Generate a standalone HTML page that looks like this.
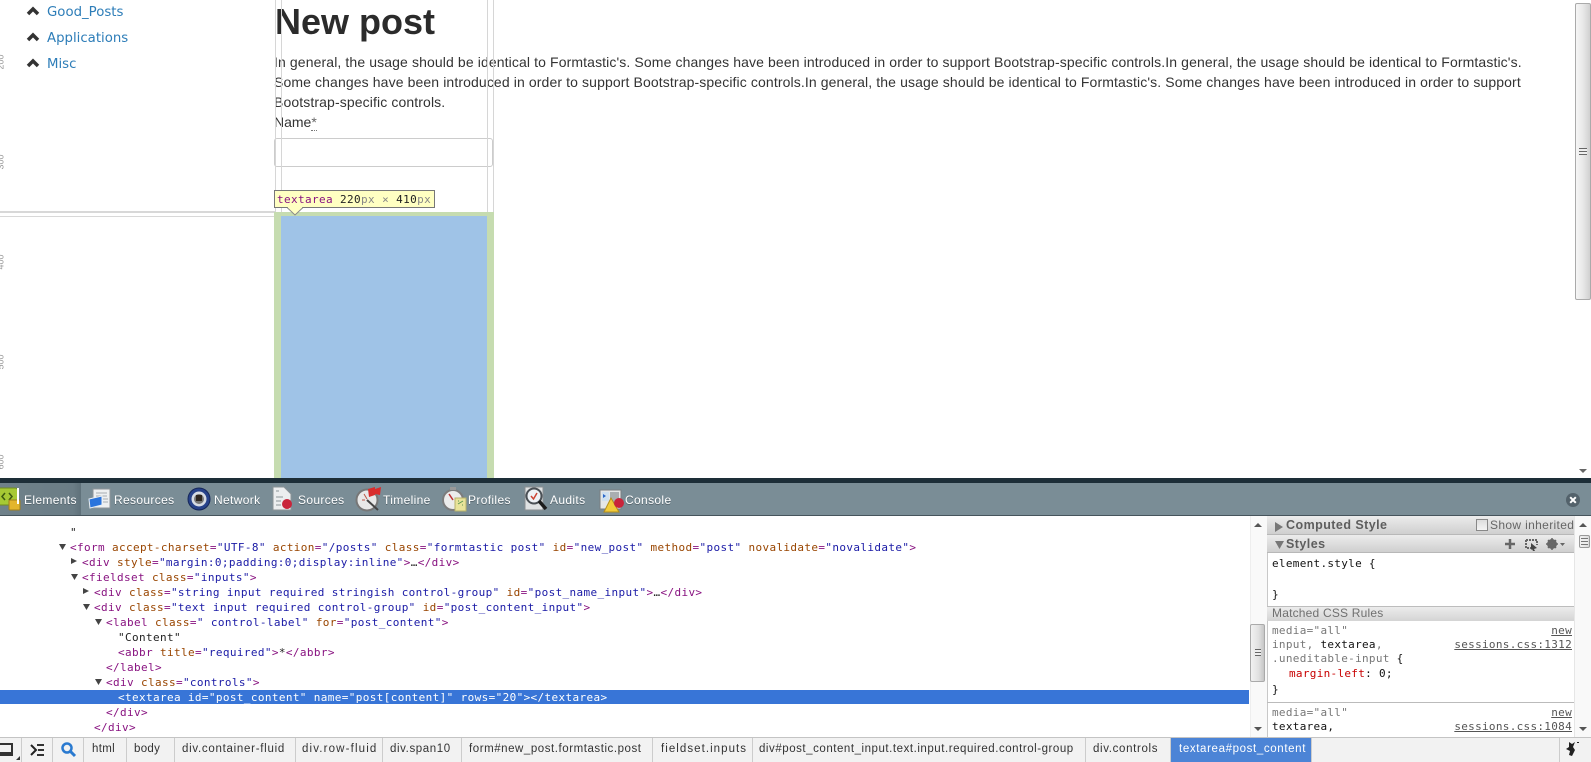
<!DOCTYPE html>
<html><head><meta charset="utf-8"><style>
html,body{margin:0;padding:0;background:#fff}
body{position:relative;width:1591px;height:762px;overflow:hidden;font-family:"Liberation Sans",sans-serif}
.a{position:absolute}
.l{position:absolute;left:47px;font:13.3px/16px "DejaVu Sans",sans-serif;color:#2d7db8;white-space:nowrap}
.r{position:absolute;left:-8px;width:17px;height:8px;font:9px/8px "Liberation Sans",sans-serif;color:#999;transform:rotate(-90deg);text-align:center}
.d{position:absolute;white-space:pre;font:11px/15px "DejaVu Sans Mono",monospace;letter-spacing:.37px;color:#881280;height:15px}
.d i{font-style:normal;color:#994500}.d b{font-weight:normal;color:#1a1aa6}.d u{text-decoration:none;color:#222}
.t{position:absolute;top:492px;font:12px/16px "Liberation Sans",sans-serif;color:#fff;letter-spacing:.35px;white-space:nowrap;text-shadow:0 1px 0 #56656d}
.c{position:absolute;top:741px;font:11.5px/16px "Liberation Sans",sans-serif;color:#333;white-space:nowrap;letter-spacing:.3px}
.s{position:absolute;top:738px;width:1px;height:24px;background:#ccc}
.h{position:absolute;left:1267px;width:307px;background:linear-gradient(#ececec,#cfcfcf);border-bottom:1px solid #b8b8b8;box-sizing:border-box}
.m{position:absolute;white-space:pre;font:11px/15px "DejaVu Sans Mono",monospace;letter-spacing:.3px;color:#111}
.g{color:#777}
.n{position:absolute;right:19px;white-space:pre;font:11px/15px "DejaVu Sans Mono",monospace;letter-spacing:.3px;color:#555;text-decoration:underline}
</style></head><body>

<!-- sidebar -->
<svg class="a" style="left:26px;top:0" width="14" height="70" fill="none" stroke="#333" stroke-width="3.500"><path d="M2 14 7 9 12 14M2 40 7 35 12 40M2 66 7 61 12 66"/></svg>
<div class="l" style="top:5px">Good_Posts</div>
<div class="l" style="top:31px">Applications</div>
<div class="l" style="top:57px">Misc</div>
<div class="r" style="top:58px">200</div>
<div class="r" style="top:158px">300</div>
<div class="r" style="top:258px">400</div>
<div class="r" style="top:358px">500</div>
<div class="r" style="top:458px">600</div>

<!-- page content -->
<div class="a" style="left:275px;top:0;font:bold 36px/44px 'Liberation Sans',sans-serif;color:#2b2b2b">New post</div>
<div class="a" style="left:274px;top:52px;width:1290px;white-space:nowrap;font:14px/20px 'Liberation Sans',sans-serif;letter-spacing:.115px;color:#333">In general, the usage should be identical to Formtastic's. Some changes have been introduced in order to support Bootstrap-specific controls.In general, the usage should be identical to Formtastic's.<br>Some changes have been introduced in order to support Bootstrap-specific controls.In general, the usage should be identical to Formtastic's. Some changes have been introduced in order to support<br>Bootstrap-specific controls.<br><span style="letter-spacing:0">Name<span style="border-bottom:1px dotted #777;color:#666">*</span></span></div>
<div class="a" style="left:274px;top:138px;width:219px;height:29px;box-sizing:border-box;border:1px solid #ccc;border-radius:3px"></div>

<!-- guides -->
<div class="a" style="left:275px;top:0;width:1px;height:212px;background:#d6d6d6"></div>
<div class="a" style="left:281px;top:0;width:1px;height:212px;background:#d6d6d6"></div>
<div class="a" style="left:487px;top:0;width:1px;height:212px;background:#d6d6d6"></div>
<div class="a" style="left:493px;top:0;width:1px;height:212px;background:#d6d6d6"></div>
<div class="a" style="left:0;top:211px;width:275px;height:2px;background:#d8d8d8"></div>
<div class="a" style="left:0;top:216px;width:275px;height:1px;background:#d8d8d8"></div>

<!-- highlight -->
<div class="a" style="left:274px;top:212px;width:220px;height:268px;background:#c6dcb0"></div>
<div class="a" style="left:281px;top:216px;width:206px;height:264px;background:#9fc3e7"></div>

<!-- tooltip -->
<div class="a" style="left:274px;top:190px;width:161px;height:18px;box-sizing:border-box;background:#ffffc2;border:1px solid #777;font:11px/17px 'DejaVu Sans Mono',monospace;letter-spacing:.38px;color:#222;padding-left:2px;white-space:pre"><span style="color:#881280">textarea</span> 220<span style="color:#888">px</span> <span style="color:#888">×</span> 410<span style="color:#888">px</span></div>
<svg class="a" style="left:287px;top:207px" width="18" height="9"><path d="M0 0.500 8 8 16 0.500" fill="#ffffc2" stroke="#888"/><path d="M1 0H15V1H1z" fill="#ffffc2"/></svg>

<!-- page scrollbar -->
<div class="a" style="left:1574px;top:0;width:17px;height:478px;background:#fff"></div>
<div class="a" style="left:1575px;top:3px;width:16px;height:297px;box-sizing:border-box;border:1px solid #aaa;border-radius:2px;background:linear-gradient(90deg,#f6f6f6,#e8e8e8 50%,#d0d0d0)"></div>
<div class="a" style="left:1579px;top:148px;width:8px;height:7px;background:repeating-linear-gradient(#666 0 1px,#eee 1px 3px)"></div>
<svg class="a" style="left:1578px;top:468px" width="10" height="6"><path d="M1 1H9L5 5z" fill="#666"/></svg>

<!-- devtools toolbar -->
<div class="a" style="left:0;top:478px;width:1591px;height:5px;background:#1d2e38"></div>
<div class="a" style="left:0;top:483px;width:1591px;height:33px;box-sizing:border-box;background:#7a8d96;border-bottom:1px solid #46545c"></div>
<div class="a" style="left:0;top:483px;width:81px;height:32px;background:linear-gradient(90deg,#6f818a,#6b7d86 90%,#5f717a)"></div>

<!-- toolbar icons -->
<svg class="a" style="left:0;top:487px" width="22" height="24"><rect x="-3" y="1" width="21" height="17" rx="3" fill="#a6c934" stroke="#6f8c20"/><path d="M5 6 2 9.500 5 13M9 6 12 9.500 9 13" fill="none" stroke="#3c5a10" stroke-width="1.500"/><rect x="9" y="13" width="11" height="10" rx="1" fill="#e3b52c" stroke="#a27f1b"/><path d="M18 1V17" stroke="#fff" stroke-width="2"/></svg>
<svg class="a" style="left:88px;top:488px" width="23" height="22"><rect x="5" y="1" width="17" height="19" fill="#eef0f1" stroke="#8d9599"/><path d="M8 5H19M8 8H19M15 11H20M15 14H20" stroke="#a5adb1"/><path d="M1 11 14 8V17L2 20z" fill="#2a74dc" stroke="#e9eef2"/></svg>
<svg class="a" style="left:187px;top:487px" width="24" height="24"><circle cx="12" cy="12" r="11" fill="#27428a" stroke="#17285a"/><circle cx="12" cy="12" r="7.500" fill="#d7dce4"/><circle cx="12" cy="12" r="5" fill="#777"/><rect x="9" y="8" width="6" height="6" fill="#2e2620"/></svg>
<svg class="a" style="left:271px;top:486px" width="24" height="26"><path d="M2 1H13L20 8V24H2z" fill="#eceeef" stroke="#8a9296"/><path d="M5 5H8M5 11H12M5 15H10M5 19H10" stroke="#8d959a"/><circle cx="16" cy="18" r="5" fill="#c9243a"/></svg>
<svg class="a" style="left:355px;top:486px" width="28" height="26"><circle cx="12" cy="14" r="10.500" fill="#e8e8e8" stroke="#777" stroke-width="2"/><path d="M12 14 23 24" stroke="#444" stroke-width="2"/><path d="M9 8 12 13M7 14H10" stroke="#b54"/><path d="M13 3 20 1 20 9 14 11zM20 3 26 1 25 9 20 8z" fill="#d92c2c"/></svg>
<svg class="a" style="left:442px;top:486px" width="26" height="26"><circle cx="11" cy="14" r="10" fill="#ececec" stroke="#7c7c7c" stroke-width="2"/><rect x="8" y="1" width="6" height="3" fill="#999"/><path d="M11 14 7 8" stroke="#b33" stroke-width="1.500"/><rect x="13" y="12" width="11" height="13" fill="#e8e39a" stroke="#b7b26b"/><path d="M16 18 21 15M16 15H17M20 19H21" stroke="#5a9650"/></svg>
<svg class="a" style="left:524px;top:486px" width="24" height="26"><rect x="1" y="1" width="18" height="23" fill="#dfe2e3" stroke="#8a8f92"/><circle cx="10" cy="10" r="7.500" fill="#eef2f6" stroke="#4a5055" stroke-width="2"/><path d="M7 10 9.500 13 13 7" fill="none" stroke="#c43" stroke-width="1.500"/><path d="M15 15 22 23" stroke="#1c1c1c" stroke-width="3.500"/></svg>
<svg class="a" style="left:599px;top:489px" width="26" height="24"><rect x="1" y="1" width="21" height="19" fill="#e4e6e7" stroke="#7a7f82"/><rect x="3" y="3" width="7" height="9" fill="#cfe0f0"/><path d="M4 5 7 7 4 9" fill="#2a66c8"/><rect x="11" y="3" width="9" height="15" fill="#a9aeb1"/><path d="M5 23 12 9 20 23z" fill="#f1cb3a" stroke="#b28e1c"/><circle cx="20" cy="14" r="5" fill="#c9243a"/></svg>

<div class="t" style="left:24px">Elements</div>
<div class="t" style="left:114px">Resources</div>
<div class="t" style="left:214px">Network</div>
<div class="t" style="left:298px">Sources</div>
<div class="t" style="left:383px">Timeline</div>
<div class="t" style="left:468px">Profiles</div>
<div class="t" style="left:550px">Audits</div>
<div class="t" style="left:625px">Console</div>
<svg class="a" style="left:1565px;top:492px" width="16" height="16"><circle cx="8" cy="8" r="7" fill="#53626b"/><path d="M5.200 5.200 10.800 10.800M10.800 5.200 5.200 10.800" stroke="#fff" stroke-width="2"/></svg>

<!-- DOM tree -->
<div class="a" style="left:0;top:690px;width:1249px;height:14px;background:#3875d7"></div>
<svg class="a" style="left:0;top:517px" width="130" height="190" fill="#444"><path d="M59 27H66L62.500 33zM71 41V47L77 44zM71 57H78L74.500 63zM83 71V77L89 74zM83 87H90L86.500 93zM95 102H102L98.500 108zM95 162H102L98.500 168z"/></svg>
<div class="d" style="left:70px;top:525px"><u>"</u></div>
<div class="d" style="left:70px;top:540px">&lt;form <i>accept-charset</i>=<b>"UTF-8"</b> <i>action</i>=<b>"/posts"</b> <i>class</i>=<b>"formtastic post"</b> <i>id</i>=<b>"new_post"</b> <i>method</i>=<b>"post"</b> <i>novalidate</i>=<b>"novalidate"</b>&gt;</div>
<div class="d" style="left:82px;top:555px">&lt;div <i>style</i>=<b>"margin:0;padding:0;display:inline"</b>&gt;<u>…</u>&lt;/div&gt;</div>
<div class="d" style="left:82px;top:570px">&lt;fieldset <i>class</i>=<b>"inputs"</b>&gt;</div>
<div class="d" style="left:94px;top:585px">&lt;div <i>class</i>=<b>"string input required stringish control-group"</b> <i>id</i>=<b>"post_name_input"</b>&gt;<u>…</u>&lt;/div&gt;</div>
<div class="d" style="left:94px;top:600px">&lt;div <i>class</i>=<b>"text input required control-group"</b> <i>id</i>=<b>"post_content_input"</b>&gt;</div>
<div class="d" style="left:106px;top:615px">&lt;label <i>class</i>=<b>" control-label"</b> <i>for</i>=<b>"post_content"</b>&gt;</div>
<div class="d" style="left:118px;top:630px"><u>"Content"</u></div>
<div class="d" style="left:118px;top:645px">&lt;abbr <i>title</i>=<b>"required"</b>&gt;<u>*</u>&lt;/abbr&gt;</div>
<div class="d" style="left:106px;top:660px">&lt;/label&gt;</div>
<div class="d" style="left:106px;top:675px">&lt;div <i>class</i>=<b>"controls"</b>&gt;</div>
<div class="d" style="left:118px;top:690px;color:#fff">&lt;textarea id="post_content" name="post[content]" rows="20"&gt;&lt;/textarea&gt;</div>
<div class="d" style="left:106px;top:705px">&lt;/div&gt;</div>
<div class="d" style="left:94px;top:720px">&lt;/div&gt;</div>

<!-- elements scrollbar -->
<div class="a" style="left:1250px;top:516px;width:17px;height:221px;background:#f9f9f9;border-left:1px solid #eee;box-sizing:border-box"></div>
<div class="a" style="left:1250px;top:624px;width:15px;height:58px;box-sizing:border-box;border:1px solid #aaa;border-radius:2px;background:linear-gradient(90deg,#f2f2f2,#e0e0e0 60%,#c6c6c6)"></div>
<div class="a" style="left:1255px;top:649px;width:6px;height:7px;background:repeating-linear-gradient(#666 0 1px,#eee 1px 3px)"></div>
<svg class="a" style="left:1253px;top:522px" width="10" height="6"><path d="M1 5H9L5 1z" fill="#555"/></svg>
<svg class="a" style="left:1253px;top:726px" width="10" height="6"><path d="M1 1H9L5 5z" fill="#555"/></svg>

<!-- styles sidebar -->
<div class="a" style="left:1267px;top:516px;width:1px;height:221px;background:#c8c8c8"></div>
<div class="h" style="top:516px;height:19px"></div>
<div class="h" style="top:535px;height:18px"></div>
<svg class="a" style="left:1274px;top:520px" width="12" height="30" fill="#777"><path d="M1 2V12L9 7zM1 21H10L5.500 29z"/></svg>
<div class="a" style="left:1286px;top:517px;font:bold 12.500px/17px 'Liberation Sans',sans-serif;letter-spacing:.45px;color:#5e5e5e">Computed Style</div>
<div class="a" style="left:1286px;top:535px;font:bold 12.500px/18px 'Liberation Sans',sans-serif;letter-spacing:.45px;color:#5e5e5e">Styles</div>
<div class="a" style="left:1476px;top:519px;width:12px;height:12px;box-sizing:border-box;border:1px solid #888;background:linear-gradient(#ddd,#f4f4f4)"></div>
<div class="a" style="left:1490px;top:517px;font:12px/17px 'Liberation Sans',sans-serif;letter-spacing:.35px;color:#666">Show inherited</div>
<svg class="a" style="left:1504px;top:537px" width="64" height="15"><path d="M6 2V12M1 7H11" stroke="#666" stroke-width="2.500"/><path d="M22 3H33V8M22 3V11H27" stroke="#666" stroke-width="2" stroke-dasharray="2 1" fill="none"/><path d="M27 6 33 11 30 12 31 14 29 14 28 12 27 13z" fill="#444"/><circle cx="48" cy="7" r="3.500" fill="none" stroke="#666" stroke-width="3"/><path d="M48 1V13M42 7H54M44 3 52 11M52 3 44 11" stroke="#666" stroke-width="1.500"/><path d="M56 6H61L58.500 9z" fill="#666"/></svg>
<div class="m" style="left:1272px;top:556px">element.style {</div>
<div class="m" style="left:1272px;top:587px">}</div>
<div class="a" style="left:1267px;top:606px;width:307px;height:15px;box-sizing:border-box;background:linear-gradient(#ececec,#d4d4d4);border-top:1px solid #bdbdbd;font:12px/13px 'Liberation Sans',sans-serif;letter-spacing:.2px;color:#707070;padding-left:5px">Matched CSS Rules</div>
<div class="m g" style="left:1272px;top:623px">media="all"</div>
<div class="n" style="top:623px">new</div>
<div class="m g" style="left:1272px;top:637px">input, <span style="color:#111">textarea</span>,</div>
<div class="n" style="top:637px">sessions.css:1312</div>
<div class="m g" style="left:1272px;top:651px">.uneditable-input <span style="color:#111">{</span></div>
<div class="m" style="left:1289px;top:666px"><span style="color:#c80000">margin-left</span>: 0;</div>
<div class="m" style="left:1272px;top:682px">}</div>
<div class="a" style="left:1267px;top:702px;width:307px;height:1px;background:#bbb"></div>
<div class="m g" style="left:1272px;top:705px">media="all"</div>
<div class="n" style="top:705px">new</div>
<div class="m" style="left:1272px;top:719px">textarea,</div>
<div class="n" style="top:719px">sessions.css:1084</div>

<!-- right scrollbar -->
<div class="a" style="left:1574px;top:516px;width:17px;height:221px;background:#f9f9f9;border-left:1px solid #e6e6e6;box-sizing:border-box"></div>
<div class="a" style="left:1579px;top:535px;width:11px;height:13px;box-sizing:border-box;border:1px solid #999;border-radius:2px;background:linear-gradient(90deg,#f4f4f4,#dcdcdc)"></div>
<div class="a" style="left:1581px;top:538px;width:7px;height:7px;background:repeating-linear-gradient(#777 0 1px,#eee 1px 3px)"></div>
<svg class="a" style="left:1578px;top:522px" width="10" height="6"><path d="M1 5H9L5 1z" fill="#555"/></svg>
<svg class="a" style="left:1578px;top:726px" width="10" height="6"><path d="M1 1H9L5 5z" fill="#555"/></svg>

<!-- bottom bar -->
<div class="a" style="left:0;top:737px;width:1591px;height:25px;box-sizing:border-box;background:#f2f2f2;border-top:1px solid #c4c4c4"></div>
<div class="a" style="left:1171px;top:738px;width:140px;height:24px;background:#4c84d6"></div>
<svg class="a" style="left:0;top:738px" width="82" height="24"><path d="M0 6H12V17H0M-2 15H12" fill="none" stroke="#333" stroke-width="2"/><path d="M20 18V22H16z" fill="#333"/><path d="M31 7 36 12 31 17" fill="none" stroke="#222" stroke-width="2"/><path d="M37 7H44M38 12H44M37 17H44" stroke="#333" stroke-width="2"/><circle cx="67" cy="10" r="4.500" fill="none" stroke="#2a7ad0" stroke-width="2.500"/><path d="M70 13 75 18" stroke="#2a7ad0" stroke-width="3"/></svg>
<div class="s" style="left:21px"></div><div class="s" style="left:52px"></div><div class="s" style="left:83px"></div>
<div class="s" style="left:126px"></div><div class="s" style="left:174px"></div><div class="s" style="left:295px"></div>
<div class="s" style="left:382px"></div><div class="s" style="left:461px"></div><div class="s" style="left:652px"></div>
<div class="s" style="left:752px"></div><div class="s" style="left:1085px"></div><div class="s" style="left:1170px"></div><div class="s" style="left:1311px"></div><div class="s" style="left:1559px"></div>
<div class="c" style="left:92px">html</div>
<div class="c" style="left:134px">body</div>
<div class="c" style="left:182px;letter-spacing:.72px">div.container-fluid</div>
<div class="c" style="left:302px;letter-spacing:1.15px">div.row-fluid</div>
<div class="c" style="left:390px;letter-spacing:.6px">div.span10</div>
<div class="c" style="left:469px;letter-spacing:.55px">form#new_post.formtastic.post</div>
<div class="c" style="left:661px;letter-spacing:1.05px">fieldset.inputs</div>
<div class="c" style="left:759px;letter-spacing:.54px">div#post_content_input.text.input.required.control-group</div>
<div class="c" style="left:1093px;letter-spacing:.65px">div.controls</div>
<div class="c" style="left:1179px;letter-spacing:.63px;color:#fff">textarea#post_content</div>
<svg class="a" style="left:1563px;top:740px" width="18" height="18"><path d="M6 2 9 4 12 2 10 7 12 10 9 16 6 15 7 11 3 9 6 7zM14 2H16V3H14z" fill="#222"/></svg>
</body></html>
